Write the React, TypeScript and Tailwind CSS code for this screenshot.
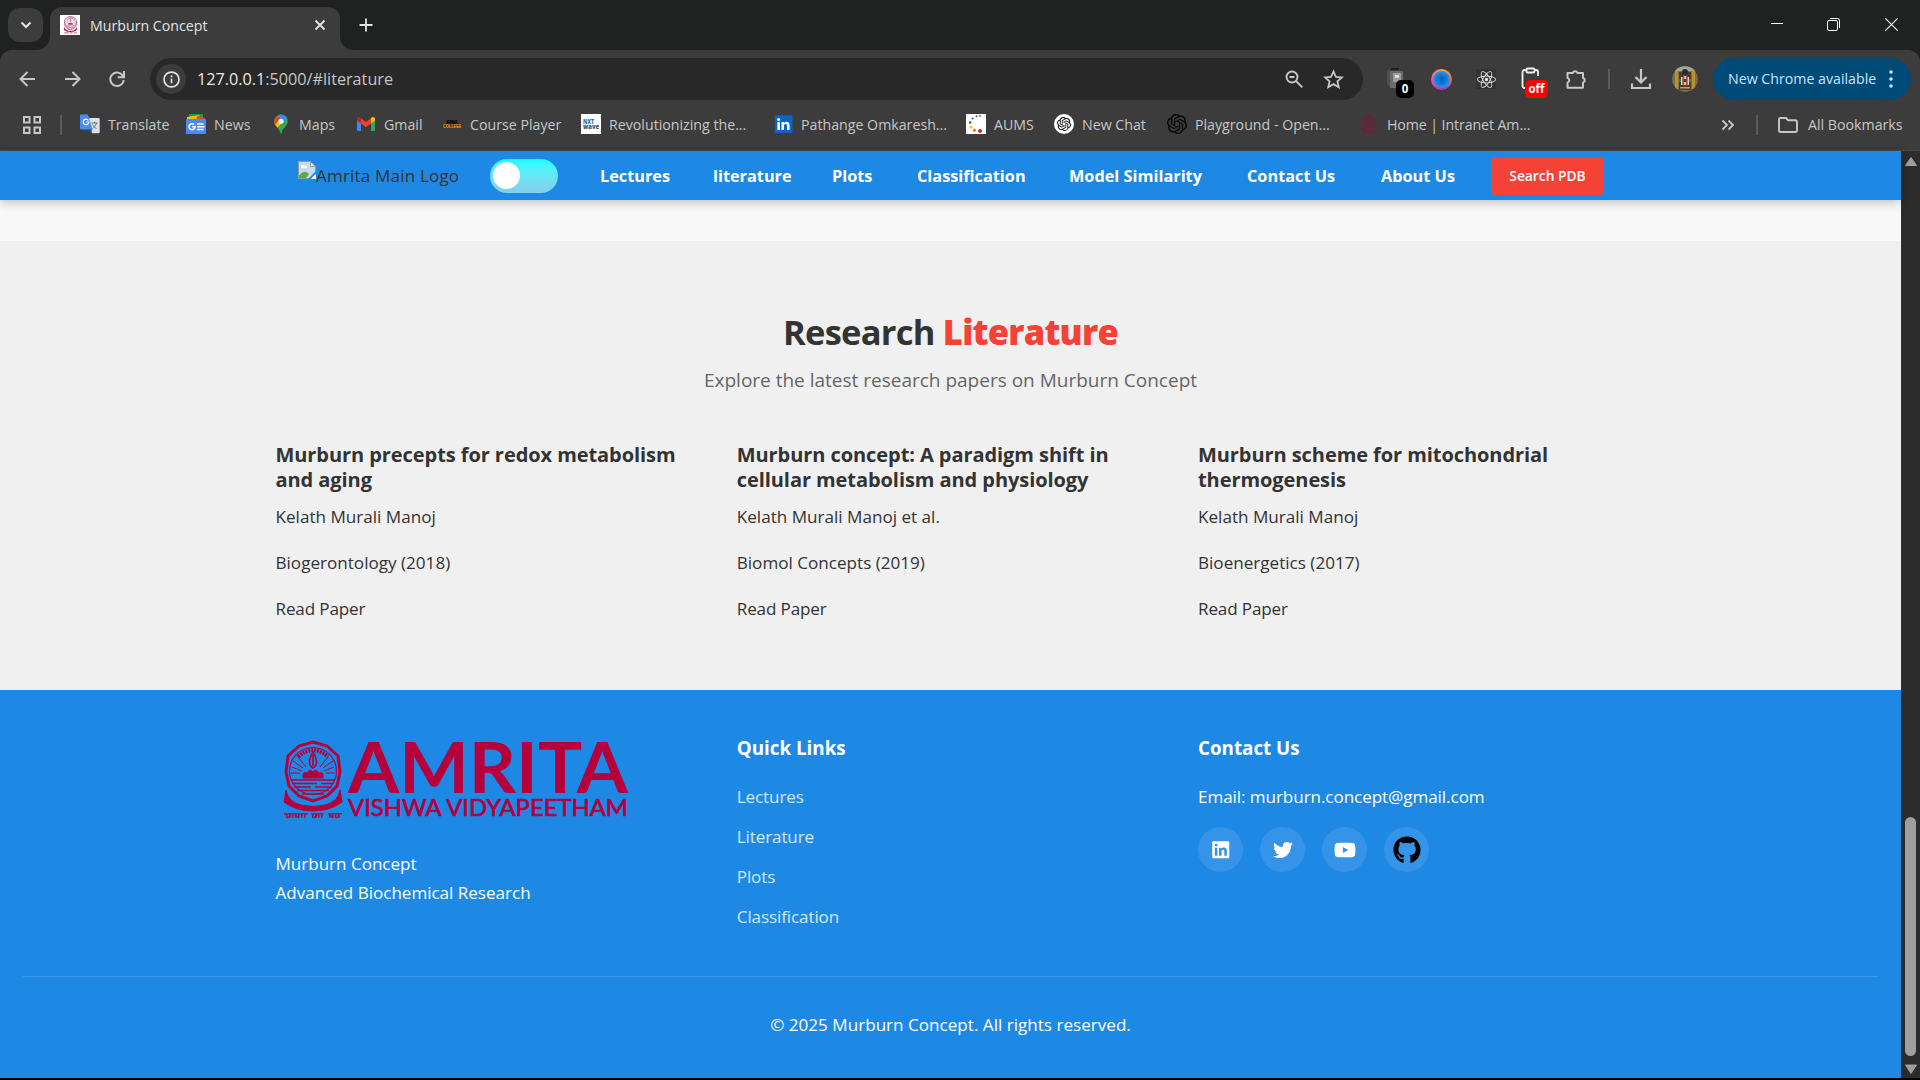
import type { ReactNode } from "react";
import { FaLinkedin, FaTwitter, FaYoutube, FaGithub, FaReact } from "react-icons/fa";
import { SiOpenai } from "react-icons/si";

const UI = "font-['Open_Sans','Noto_Sans',sans-serif]";

function Emblem({ className, color }: { className: string; color: string }) {
  return (
    <svg viewBox="0 0 60 80" className={className} fill="none" stroke={color}>
      <path d="M30 2 L44 6 L55 16 L57 32 L54 46 L44 56 L30 61 L16 56 L6 46 L3 32 L5 16 L16 6 Z" strokeWidth="3" />
      <circle cx="30" cy="31" r="23.5" strokeWidth="1.2" />
      <path d="M15 17 Q30 3 45 17" strokeWidth="4" strokeDasharray="2 1" />
      <path d="M30 12 Q23 24 30 28 Q37 24 30 12 Z M30 15 V26" strokeWidth="1.6" />
      <path d="M9 27 L19 31 M10 21 L20 28 M15 17 L23 27 M51 27 L41 31 M50 21 L40 28 M45 17 L37 27 M8 33 H17 M52 33 H43" strokeWidth="1" />
      <path d="M20 38 Q19 31 24 33 Q27 28 30 32 Q33 28 36 33 Q41 31 40 38 Z" fill={color} strokeWidth="1" />
      <path d="M8 40 H52 M9 43.5 H34 M38 43.5 H51 M11 47 H28 M32 47 H49 M14 50.5 H46 M19 54 H41" strokeWidth="1.4" />
      <path d="M3 50 Q5 62 18 65 Q30 68 42 65 Q55 62 57 50 L59 62 Q47 71 30 71 Q13 71 1 62 Z" fill={color} strokeWidth="1" />
      <path d="M1 73.800 H25 M28 73.800 H41 M45 73.800 H59" strokeWidth="1.200" />
      <path d="M3 76 H23 M29 76 H40 M46 76 H57" strokeWidth="3.500" strokeDasharray="1.500 1.500" />
      <path d="M4 78 l4 -2 M12 75 l4 3 M31 78 l3 -3 M47 75 l3 3 M53 78 l4 -2" strokeWidth="1.300" />
    </svg>
  );
}

function TranslateIcon() {
  return (
    <svg viewBox="0 0 20 20" className="size-5">
      <path d="M8 4h10.500a1.200 1.200 0 0 1 1.200 1.200V18a1.200 1.200 0 0 1-1.200 1.200H12z" fill="#dfe1e5" />
      <path d="M11.500 9h6M14.500 7.500V9M16.500 9c-.5 2.500-2.500 4.500-4 5.500M12.500 10.500c.8 1.800 2.500 3.500 4 4" stroke="#5f7780" strokeWidth="1" fill="none" />
      <path d="M1.200.5H8l4.500 15H1.200A1.100 1.100 0 0 1 0 14.400V1.600A1.100 1.100 0 0 1 1.200.5z" fill="#4a8af4" />
      <path d="M9 15.500h3.500L10 19.200z" fill="#1f57c3" />
      <path d="M8.300 6.300A2.800 2.800 0 1 0 8.800 8H6.400" stroke="#fff" strokeWidth="1.200" fill="none" />
    </svg>
  );
}

function NewsIcon() {
  return (
    <svg viewBox="0 0 20 20" className="size-5">
      <path d="M3 0h14v6H3z" fill="#0f9d58" />
      <path d="M1 3l12-2 2 6H1z" fill="#fbbc04" />
      <path d="M11 2l8 2-1 4h-8z" fill="#ea4335" />
      <rect y="5" width="20" height="15" rx="1" fill="#4a8af4" />
      <path d="M8.200 10.600A3 3 0 1 0 9 12.700H6.200" stroke="#fff" strokeWidth="1.500" fill="none" />
      <path d="M11 10h6.500M11 12.700h7.500M11 15.400h6.500" stroke="#fff" strokeWidth="1.500" />
    </svg>
  );
}

function MapsIcon() {
  return (
    <svg viewBox="0 0 20 20" className="size-5">
      <defs>
        <clipPath id="pin">
          <path d="M10 .5a6.800 6.800 0 0 0-6.800 6.800c0 4.700 5.300 6.500 6 11.400.2 1.100 1.400 1.100 1.600 0 .7-4.900 6-6.700 6-11.400A6.800 6.800 0 0 0 10 .5z" />
        </clipPath>
      </defs>
      <g clipPath="url(#pin)">
        <path d="M0 0h20v20H0z" fill="#34a853" />
        <path d="M20 0L4 16l-4-4L8.500 6z" fill="#fbbc04" />
        <path d="M8 0h12v3l-8 5-5-4z" fill="#4285f4" />
        <path d="M0 0h6l3 5-5 6-4-4z" fill="#ea4335" />
      </g>
      <circle cx="10" cy="7.200" r="2.500" fill="#fff" />
    </svg>
  );
}

function GmailIcon() {
  return (
    <svg viewBox="0 0 20 20" className="size-5">
      <path d="M1 5.500v10A1.300 1.300 0 0 0 2.300 17H5V8z" fill="#4285f4" />
      <path d="M19 5.500v10a1.300 1.300 0 0 1-1.300 1.500H15V8z" fill="#34a853" />
      <path d="M15 4.300V9.500l4-3V5c0-1.700-1.900-2.600-3.200-1.600z" fill="#fbbc04" />
      <path d="M1 5v1.500l4 3V4.300l-.8-.9C2.900 2.400 1 3.300 1 5z" fill="#c5221f" />
      <path d="M5 9.500V4.200l5 3.800 5-3.800v5.300l-5 3.800z" fill="#ea4335" />
    </svg>
  );
}

function CollegeIcon() {
  return (
    <svg viewBox="0 0 20 20" className="size-5 overflow-visible" fontFamily="Open Sans, sans-serif" fontWeight="800">
      <text x="4.500" y="9.500" fontSize="5.500" textLength="11" lengthAdjust="spacingAndGlyphs" fill="#000">APNA</text>
      <text x="1" y="14" fontSize="5.500" textLength="18" lengthAdjust="spacingAndGlyphs" fill="#d08a0c">COLLEGE</text>
    </svg>
  );
}

function NxtIcon() {
  return (
    <svg viewBox="0 0 20 20" className="size-5" fontFamily="Open Sans, sans-serif" fontWeight="800">
      <path d="M0 0h20v20H0z" fill="#fff" />
      <text x="2" y="9.500" fontSize="6" textLength="11" lengthAdjust="spacingAndGlyphs" fill="#2272b5">NXT</text>
      <text x="2" y="14.500" fontSize="6" textLength="16" lengthAdjust="spacingAndGlyphs" fill="#31557a">wave</text>
    </svg>
  );
}

function LinkedInIcon() {
  return (
    <svg viewBox="0 0 20 20" className="size-5">
      <rect x="1.800" y="1.300" width="17.600" height="17.600" rx="1" fill="#0a66c2" />
      <circle cx="5.600" cy="5.400" r="1.500" fill="#fff" />
      <path d="M4.400 8h2.500v8H4.400zM8.500 8H11v1.100c1.300-2 5.600-1.900 5.600 2.100V16H14v-4.200c0-2.400-3-2.200-3 0V16H8.500z" fill="#fff" />
    </svg>
  );
}

function AumsIcon() {
  return (
    <svg viewBox="0 0 20 20" className="size-5">
      <path d="M0 0h20v20H0z" fill="#fff" />
      <circle cx="14" cy="2" r="1" fill="#c13b8c" />
      <circle cx="10.500" cy="2.200" r="1" fill="#6c3fa0" />
      <circle cx="6.500" cy="4.500" r="1.100" fill="#3653a5" />
      <circle cx="4.200" cy="8.500" r="1.300" fill="#1a7a52" />
      <circle cx="5" cy="13" r="1.500" fill="#f2c40f" />
      <circle cx="8.500" cy="16.200" r="1.700" fill="#e8871c" />
      <circle cx="14" cy="17" r="2" fill="#d4202a" />
    </svg>
  );
}

const bookmarks: { label: string; width: string; icon: ReactNode }[] = [
  { label: "Translate", width: "w-[106px]", icon: <TranslateIcon /> },
  { label: "News", width: "w-[85px]", icon: <NewsIcon /> },
  { label: "Maps", width: "w-[85px]", icon: <MapsIcon /> },
  { label: "Gmail", width: "w-[86px]", icon: <GmailIcon /> },
  { label: "Course Player", width: "w-[139px]", icon: <CollegeIcon /> },
  { label: "Revolutionizing the...", width: "w-[192px]", icon: <NxtIcon /> },
  { label: "Pathange Omkaresh...", width: "w-[193px]", icon: <LinkedInIcon /> },
  { label: "AUMS", width: "w-[88px]", icon: <AumsIcon /> },
  {
    label: "New Chat",
    width: "w-[113px]",
    icon: (
      <span className="flex size-5 items-center justify-center rounded-full bg-white">
        <SiOpenai className="size-3.5 text-black" />
      </span>
    ),
  },
  { label: "Playground - Open...", width: "w-[192px]", icon: <SiOpenai className="size-5 text-black" /> },
  { label: "Home | Intranet Am...", width: "w-[200px] tracking-[-0.1px]", icon: <Emblem className="h-5 w-5" color="#8d1238" /> },
];

function TabStrip() {
  return (
    <div className="flex h-[50px] bg-[#1f2221]">
      <div className="ml-2 mt-2 flex h-[34px] w-[35px] items-center justify-center rounded-xl bg-[#3c3c3c]">
        <svg viewBox="0 0 12 12" className="size-3" fill="none" stroke="#e3e3e3" strokeWidth="2">
          <path d="M1.500 3.500L6 8l4.500-4.500" />
        </svg>
      </div>
      <svg viewBox="0 0 14 14" className="-ml-[7px] mt-9 size-3.5">
        <path d="M14 0v14H0C8 14 14 8 14 0z" fill="#3c3c3c" />
      </svg>
      <div className="mt-[7px] flex h-[43px] w-[290px] items-center rounded-t-xl bg-[#3c3c3c] pb-[7px] pl-[10px]">
        <span className="flex h-5 w-5 items-center justify-center bg-white">
          <Emblem className="h-[18px] w-[17px]" color="#a02050" />
        </span>
        <span className="ml-[10px] w-[224px] whitespace-nowrap pt-px text-[14.200px] text-[#e3e3e3]">Murburn Concept</span>
        <svg viewBox="0 0 12 12" className="size-3" fill="none" stroke="#e3e3e3" strokeWidth="1.900">
          <path d="M1.500 1.500l9 9M10.500 1.500l-9 9" />
        </svg>
      </div>
      <svg viewBox="0 0 14 14" className="mt-9 size-3.5">
        <path d="M0 0v14h14C6 14 0 8 0 0z" fill="#3c3c3c" />
      </svg>
      <svg viewBox="0 0 14 14" className="ml-[5px] mt-[18px] size-3.5" fill="none" stroke="#e3e3e3" strokeWidth="1.800">
        <path d="M7 .5v13M.5 7h13" />
      </svg>
      <div className="ml-auto flex items-start pr-[22px] pt-[18px]">
        <svg viewBox="0 0 12 12" className="mr-11 size-3" stroke="#fff" fill="none">
          <path d="M0 5.500h12" />
        </svg>
        <svg viewBox="0 0 13 13" className="mr-[45px] size-[13px]" stroke="#fff" fill="none">
          <rect x=".5" y="2.500" width="10" height="10" rx="1.500" />
          <path d="M3 .5h7.500a2 2 0 0 1 2 2V10" />
        </svg>
        <svg viewBox="0 0 12 12" className="size-[13px]" stroke="#fff" fill="none" strokeWidth="1">
          <path d="M0 0l12 12M12 0L0 12" />
        </svg>
      </div>
    </div>
  );
}

function Toolbar() {
  return (
    <div className="flex h-[58px] items-center rounded-t-xl bg-[#3c3c3c] pl-[18px]">
      <svg viewBox="0 0 18 18" className="size-[18px]" fill="none" stroke="#c7c7c7" strokeWidth="2">
        <path d="M17 9H3M9.500 2L2.500 9l7 7" />
      </svg>
      <svg viewBox="0 0 18 18" className="ml-[28px] size-[18px]" fill="none" stroke="#c7c7c7" strokeWidth="2">
        <path d="M1 9h14M8.500 2l7 7-7 7" />
      </svg>
      <svg viewBox="0 0 18 18" className="ml-[26px] size-[18px]" fill="none" stroke="#c7c7c7" strokeWidth="2">
        <path d="M15 6.200A6.700 6.700 0 1 0 15.700 10M16 1v6.300H9.700" />
      </svg>
      <div className="ml-[24px] flex h-[42px] w-[1213px] items-center rounded-full bg-[#282828] pl-[6px]">
        <span className="flex size-[30px] items-center justify-center rounded-full bg-[#3c3c3c]">
          <svg viewBox="0 0 18 18" className="size-[17px]" fill="none" stroke="#e3e3e3" strokeWidth="1.800">
            <circle cx="9" cy="9" r="7.900" />
            <path d="M9 8v5M9 4.800v1.800" />
          </svg>
        </span>
        <span className="ml-[11px] w-[1088px] whitespace-nowrap pt-px text-[16.200px] text-[#c7c7c7]">
          <span className="text-[#e8e8e8]">127.0.0.1</span>:5000/#literature
        </span>
        <svg viewBox="0 0 18 18" className="size-[18px]" fill="none" stroke="#c7c7c7" strokeWidth="1.900">
          <circle cx="7" cy="7" r="5.500" />
          <path d="M11 11l6.300 6.300M4.500 7h5" />
        </svg>
        <svg viewBox="0 0 20 20" className="ml-[20px] size-[21px]" fill="none" stroke="#c7c7c7" strokeWidth="1.700">
          <path d="M10 2.300l2.300 5.200 5.700.5-4.300 3.800 1.300 5.600-5-3-5 3 1.300-5.600L2 8l5.700-.5z" />
        </svg>
      </div>
      <div className="relative ml-[22px] size-[28px]">
        <svg viewBox="0 0 28 28" className="size-7">
          <path d="M3 6h15v15l-4 2H5z" fill="#6a6a6a" />
          <path d="M2 6l3-2v18l-3-3z" fill="#4f4f4f" />
          <path d="M6 3h8v2H6z" fill="#222" />
          <path d="M8 8h8v9H8z" fill="#9b9b9b" />
          <path d="M10 10h4v3h-4z" fill="#ddd" />
        </svg>
        <span className="absolute left-[11px] top-[15px] flex h-[18px] w-[18px] items-center justify-center rounded-[5px] bg-black text-[11.500px] font-bold text-white">0</span>
      </div>
      <span className="ml-[18px] size-[21px] rounded-full bg-[conic-gradient(#f5a623,#f08030,#a040d0,#e03090,#ff5fb0,#f5a623)] p-[2px]">
        <span className="block size-[17px] rounded-full bg-[radial-gradient(circle,#0d5fae_5%,#1583e6_50%,#4db4ff_100%)]" />
      </span>
      <span className="ml-[24px] flex size-5 items-center justify-center bg-[#333]">
        <FaReact className="size-[19px] text-[#e8e8e8]" />
      </span>
      <div className="relative ml-[24px] h-[28px] w-[28px]">
        <svg viewBox="0 0 28 28" className="size-7" fill="none" stroke="#f2f2f2" strokeWidth="1.800">
          <path d="M6 23H4.500a2 2 0 0 1-2-2V7a2 2 0 0 1 2-2H16a2 2 0 0 1 2 2v4" />
          <rect x="6.500" y="3.500" width="8" height="4" rx="1" fill="#3c3c3c" />
        </svg>
        <span className="absolute left-[5px] top-[15px] flex h-[18px] w-[23px] items-center justify-center rounded-[5px] bg-[#ff0000] text-[11.500px] font-bold text-white">off</span>
      </div>
      <svg viewBox="0 0 22 22" className="ml-[17px] size-[22px]" fill="none" stroke="#c7c7c7" strokeWidth="2">
        <path d="M2.500 5h5.300a2.400 2.400 0 0 1 4.600 0H18v5a2.300 2.300 0 0 1 0 4.500v5.300H2.500v-5a2.600 2.600 0 0 0 0-4.900z" strokeLinejoin="round" />
      </svg>
      <span className="ml-[21px] h-5 w-[2px] bg-[#5c5c5c]" />
      <svg viewBox="0 0 22 22" className="ml-[20px] size-[22px]" fill="none" stroke="#c7c7c7" strokeWidth="2.200">
        <path d="M11 1v13M5.500 9l5.500 5.500L16.500 9M2 15.500V20h18v-4.500" />
      </svg>
      <svg viewBox="0 0 26 26" className="ml-[20px] size-[26px]">
        <clipPath id="avatar"><circle cx="13" cy="13" r="12.800" /></clipPath>
        <g clipPath="url(#avatar)">
          <path d="M0 0h26v26H0z" fill="#7b7048" />
          <path d="M0 0h26v5H0z" fill="#a5a798" />
          <path d="M3 5h3v18H3zM20 5h3v18h-3z" fill="#b9932a" />
          <path d="M7 6h12v18H7z" fill="#4d3a33" />
          <circle cx="13" cy="6" r="3" fill="#26303c" />
          <path d="M9 11h1.500v8H9zM15.500 11H17v8h-1.500z" fill="#e3d5b0" />
          <path d="M11 9h1v11h-1zM14 9h1v11h-1z" fill="#b23a3a" />
          <path d="M12 10h2v3h-2zM12 16h2v3h-2z" fill="#d9c68c" />
          <path d="M7 13h2v3H7zM17 13h2v3h-2z" fill="#3b7a6a" />
          <path d="M8 21h10v1.500H8z" fill="#b8a670" />
        </g>
      </svg>
      <div className="ml-[15px] flex h-[42px] w-[198px] items-center rounded-full bg-[#004a77] pl-[15px] text-[#c2e7ff]">
        <span className="w-[161px] whitespace-nowrap text-[14.200px]">New Chrome available</span>
        <svg viewBox="0 0 4 18" className="h-[18px] w-1" fill="currentColor">
          <circle cx="2" cy="2" r="1.800" /><circle cx="2" cy="9" r="1.800" /><circle cx="2" cy="16" r="1.800" />
        </svg>
      </div>
    </div>
  );
}

function BookmarksBar() {
  return (
    <div className="flex h-[43px] items-center border-b border-[#4a4a4a] bg-[#3c3c3c] pb-[9px] pl-[23px] text-[14.200px] text-[#c7c7c7]">
      <svg viewBox="0 0 18 18" className="size-[18px]" fill="none" stroke="#c7c7c7" strokeWidth="2">
        <path d="M1 1h5.500v5.500H1zM11.500 1H17v5.500h-5.500zM1 11.500h5.500V17H1zM11.500 11.500H17V17h-5.500z" />
      </svg>
      <span className="ml-[19px] mr-[18px] h-5 w-[2px] bg-[#5c5c5c]" />
      {bookmarks.map((b) => (
        <div key={b.label} className={`flex shrink-0 items-center gap-2 whitespace-nowrap ${b.width}`}>
          <span className="size-5 shrink-0">{b.icon}</span>
          <span>{b.label}</span>
        </div>
      ))}
      <svg viewBox="0 0 14 12" className="ml-auto h-3 w-[14px]" fill="none" stroke="#c7c7c7" strokeWidth="1.800">
        <path d="M1.500 1.500L6 6l-4.500 4.500M7.500 1.500L12 6l-4.500 4.500" />
      </svg>
      <span className="ml-[21px] h-5 w-[2px] bg-[#5c5c5c]" />
      <svg viewBox="0 0 20 16" className="ml-5 h-4 w-5" fill="none" stroke="#c7c7c7" strokeWidth="1.900">
        <path d="M1 2.500A1.500 1.500 0 0 1 2.500 1H8l2 2.200h7.500A1.500 1.500 0 0 1 19 4.700v8.800a1.500 1.500 0 0 1-1.500 1.500h-15A1.500 1.500 0 0 1 1 13.500z" />
      </svg>
      <span className="ml-[10px] w-[112px] whitespace-nowrap">All Bookmarks</span>
    </div>
  );
}

const navLinks = [
  { label: "Lectures", width: "w-[113px]" },
  { label: "literature", width: "w-[119px]" },
  { label: "Plots", width: "w-[85px]" },
  { label: "Classification", width: "w-[152px]" },
  { label: "Model Similarity", width: "w-[178px]" },
  { label: "Contact Us", width: "w-[134px]" },
  { label: "About Us", width: "w-[110px]" },
];

function Navbar() {
  return (
    <nav className="relative z-10 flex h-[49px] shrink-0 items-center bg-[#1e88e5] pl-[298px] shadow-[0_2px_10px_rgba(0,0,0,0.25)]">
      <div className="flex w-[192px] items-center whitespace-nowrap text-[17.100px] tracking-[0.150px] text-[#333]">
        <svg viewBox="0 0 18 18" className="-mt-[10px] size-[18px]">
          <path d="M.5.500h12l5 5v12H.5z" fill="#c6d9f5" stroke="#9a9a9a" />
          <path d="M12.500.500v5h5z" fill="#fff" stroke="#9a9a9a" />
          <path d="M3 6a2 2 0 0 1 3.500-1.500A2 2 0 0 1 9 7H3z" fill="#fff" />
          <path d="M1 17v-2.500Q6 8 11 13l-3 4z" fill="#5aac38" />
          <path d="M10 18l8-8v2.500L12.500 18z" fill="#1e88e5" />
          <path d="M13 18l5-5v5z" fill="#fff" />
        </svg>
        <span className="pt-px">Amrita Main Logo</span>
      </div>
      <div className="mr-[42px] flex h-[34px] w-[68px] items-center rounded-full bg-linear-to-b from-[#00ffff] to-[#87ceeb] pl-[3px]">
        <span className="size-[27px] rounded-full bg-white" />
      </div>
      {navLinks.map((l) => (
        <a key={l.label} className={`whitespace-nowrap pt-[2px] text-[16.300px] font-bold text-white ${l.width}`}>
          {l.label}
        </a>
      ))}
      <button className="h-[38px] w-[113px] whitespace-nowrap rounded-[4.500px] bg-[#f44336] pt-px text-[13.800px] font-semibold text-white">
        Search PDB
      </button>
    </nav>
  );
}

const papers = [
  { title: ["Murburn precepts for redox metabolism", "and aging"], author: "Kelath Murali Manoj", journal: "Biogerontology (2018)" },
  { title: ["Murburn concept: A paradigm shift in", "cellular metabolism and physiology"], author: "Kelath Murali Manoj et al.", journal: "Biomol Concepts (2019)" },
  { title: ["Murburn scheme for mitochondrial", "thermogenesis"], author: "Kelath Murali Manoj", journal: "Bioenergetics (2017)" },
];

function Literature() {
  return (
    <section className="h-[449px] bg-[#f0f0f0] pt-16 text-[#333]">
      <h2 className="text-center text-[34.500px] font-bold leading-[54px] tracking-[-0.750px]">
        Research <span className="font-extrabold text-[#f44336]">Literature</span>
      </h2>
      <p className="mt-[5px] text-center text-[19px] leading-8 text-[#666]">
        Explore the latest research papers on Murburn Concept
      </p>
      <div className="mx-auto mt-[46px] grid w-[1350px] grid-cols-3 gap-[33.750px]">
        {papers.map((p) => (
          <article key={p.title[0]} className="whitespace-nowrap text-[17.100px] leading-[29px]">
            <h3 className="mb-[10px] text-[20px] font-bold leading-[25px] tracking-[-0.070px]">
              {p.title[0]}
              <br />
              {p.title[1]}
            </h3>
            <p className="mb-[17px]">{p.author}</p>
            <p className="mb-[17px]">{p.journal}</p>
            <a className="tracking-[-0.150px]">Read Paper</a>
          </article>
        ))}
      </div>
    </section>
  );
}

function AmritaLogo() {
  return (
    <svg viewBox="0 0 360 90" className="h-[90px] w-[360px] overflow-visible" fill="#b5003c" fontFamily="Lato, sans-serif">
      <svg x="7" y="5" width="60" height="80">
        <Emblem className="" color="#b5003c" />
      </svg>
      <text x="72" y="58" fontSize="71" fontWeight="700" textLength="280" lengthAdjust="spacingAndGlyphs">AMRITA</text>
      <text x="72" y="81" fontSize="23" fontWeight="400" stroke="#b5003c" strokeWidth=".7" textLength="280" lengthAdjust="spacingAndGlyphs">VISHWA VIDYAPEETHAM</text>
    </svg>
  );
}

function Footer() {
  const circle = "flex size-[45px] items-center justify-center rounded-full bg-white/10 text-white";
  return (
    <footer className="h-[388px] bg-[#1e88e5] text-[17.050px] leading-[29px] text-white">
      <div className="mx-auto grid h-[286px] w-[1350px] grid-cols-3 gap-[33.750px] whitespace-nowrap pt-[43px]">
        <div className="pt-[2px]">
          <AmritaLogo />
          <p className="mt-[25px] leading-[28px]">Murburn Concept</p>
          <p className="leading-[29px]">Advanced Biochemical Research</p>
        </div>
        <div>
          <h4 className="mb-[19px] text-[18.800px] font-bold leading-[30px]">Quick Links</h4>
          <ul className="flex flex-col gap-[11px] tracking-[-0.100px] text-white/80">
            <li>Lectures</li>
            <li>Literature</li>
            <li>Plots</li>
            <li>Classification</li>
          </ul>
        </div>
        <div>
          <h4 className="mb-[19px] text-[18.800px] font-bold leading-[30px]">Contact Us</h4>
          <p className="tracking-[-0.050px]">Email: murburn.concept@gmail.com</p>
          <div className="mt-[16px] flex gap-[17px]">
            <span className={circle}><FaLinkedin className="size-[19.500px]" /></span>
            <span className={circle}><FaTwitter className="size-5" /></span>
            <span className={circle}><FaYoutube className="size-[22px]" /></span>
            <span className={circle}><FaGithub className="size-[28px] text-black" /></span>
          </div>
        </div>
      </div>
      <div className="mx-[22.500px] border-t border-white/15 pt-[33px] text-center text-[17.100px]">
        © 2025 Murburn Concept. All rights reserved.
      </div>
    </footer>
  );
}

function Scrollbar() {
  return (
    <div className="flex w-[19px] flex-col items-center bg-[#2c2c2c]">
      <svg viewBox="0 0 12 9" className="mt-[6px] h-[9px] w-3">
        <path d="M6 .5L11.500 8.500H.5z" fill="#9f9f9f" stroke="#9f9f9f" strokeLinejoin="round" />
      </svg>
      <span className="mb-2 mt-auto h-[239px] w-[11px] rounded-full bg-[#9f9f9f]" />
      <svg viewBox="0 0 12 10" className="mb-[4px] h-[10px] w-3">
        <path d="M6 9.500L11.500 1H.5z" fill="#9f9f9f" stroke="#9f9f9f" strokeLinejoin="round" />
      </svg>
    </div>
  );
}

export default function App() {
  return (
    <div className={`flex h-[1080px] w-[1920px] flex-col overflow-hidden bg-black ${UI}`}>
      <TabStrip />
      <div className="bg-[#1f2221]"><Toolbar /></div>
      <BookmarksBar />
      <div className="flex h-[927px]">
        <main className="flex w-[1901px] flex-col">
          <Navbar />
          <div className="h-[41px] bg-[#f9f9f9]" />
          <Literature />
          <Footer />
        </main>
        <Scrollbar />
      </div>
    </div>
  );
}
